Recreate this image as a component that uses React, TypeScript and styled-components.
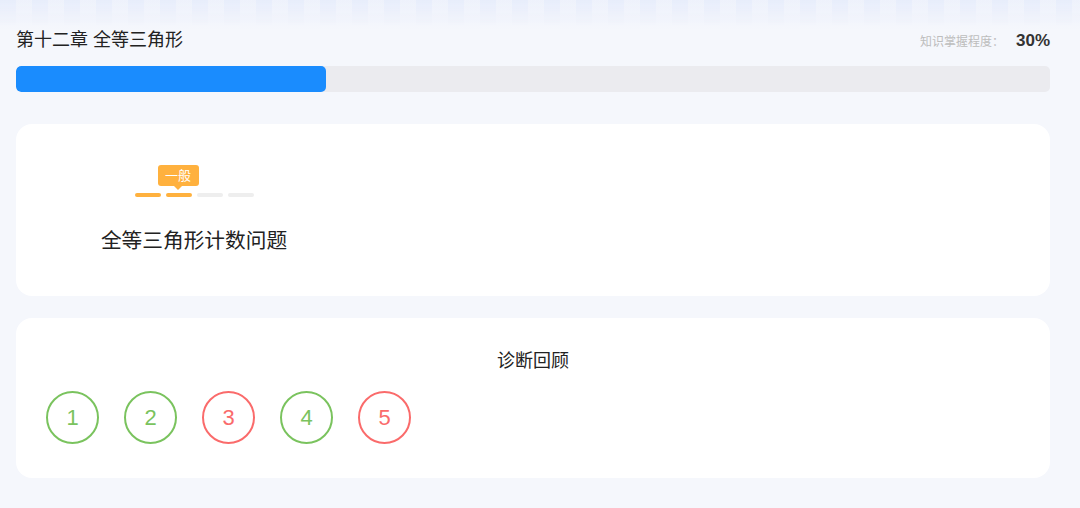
import React from "react";
import styled, { createGlobalStyle } from "styled-components";

const Global = createGlobalStyle`
  html, body { margin: 0; padding: 0; }
  body {
    background: #f5f7fc;
    font-family: "Liberation Sans", "Noto Sans CJK SC", sans-serif;
    color: #222;
  }
`;

const Page = styled.div`
  position: relative;
  width: 1080px;
  height: 508px;
  box-sizing: border-box;
  padding: 26px 30px 0 16px;
  background: linear-gradient(180deg, #eef2fc 0px, #f5f7fc 30px, #f5f7fc 100%);
  overflow: hidden;
`;

const TopPattern = styled.div`
  position: absolute;
  left: 0;
  top: 0;
  width: 100%;
  height: 26px;
  background: repeating-linear-gradient(
    90deg,
    rgba(222, 230, 250, 0.4) 0px,
    rgba(222, 230, 250, 0.4) 16px,
    rgba(240, 243, 252, 0.2) 16px,
    rgba(240, 243, 252, 0.2) 32px
  );
  -webkit-mask-image: linear-gradient(180deg, #000 0%, transparent 100%);
  mask-image: linear-gradient(180deg, #000 0%, transparent 100%);
  pointer-events: none;
`;

const Header = styled.div`
  position: relative;
  display: flex;
  align-items: center;
  justify-content: space-between;
  height: 28px;
`;

const ChapterTitle = styled.div`
  font-size: 18px;
  color: #222;
  line-height: 28px;
`;

const Mastery = styled.div`
  display: flex;
  align-items: baseline;
  gap: 12px;
  padding-top: 2px;
`;

const MasteryLabel = styled.span`
  font-size: 12px;
  color: #bdbdbd;
`;

const MasteryValue = styled.span`
  font-size: 17px;
  font-weight: bold;
  color: #333;
`;

const Track = styled.div`
  margin-top: 12px;
  height: 26px;
  border-radius: 5px;
  background: #ebebef;
  overflow: hidden;
`;

const Fill = styled.div`
  height: 100%;
  background: #1a8cfe;
  border-radius: 5px;
`;

const Card = styled.div<{ $height: number }>`
  background: #fff;
  border-radius: 16px;
  height: ${(p) => p.$height}px;
  box-sizing: border-box;
`;

const TopicCard = styled(Card)`
  margin-top: 32px;
  padding: 41px 0 0 52px;
`;

const Topic = styled.div`
  width: 252px;
  display: flex;
  flex-direction: column;
  align-items: center;
`;

const LevelWrap = styled.div`
  display: flex;
  flex-direction: column;
  align-items: center;
`;

const Badge = styled.div`
  position: relative;
  width: 41px;
  height: 21px;
  border-radius: 3px;
  background: #ffb13e;
  color: #fff;
  font-size: 13px;
  line-height: 21px;
  text-align: center;
  margin-left: -32px;
  &::after {
    content: "";
    position: absolute;
    left: 50%;
    bottom: -4px;
    margin-left: -4px;
    border-left: 4px solid transparent;
    border-right: 4px solid transparent;
    border-top: 4px solid #ffb13e;
  }
`;

const Bars = styled.div`
  display: flex;
  gap: 5px;
  margin-top: 7px;
`;

const Bar = styled.div<{ $on: boolean }>`
  width: 26px;
  height: 4px;
  border-radius: 2px;
  background: ${(p) => (p.$on ? "#ffb13e" : "#eeeeee")};
`;

const TopicName = styled.div`
  margin-top: 31px;
  font-size: 20.7px;
  color: #222;
  line-height: 26px;
`;

const ReviewCard = styled(Card)`
  margin-top: 22px;
  padding-top: 31px;
  display: flex;
  flex-direction: column;
`;

const ReviewTitle = styled.div`
  text-align: center;
  font-size: 18px;
  line-height: 24px;
  color: #222;
`;

const Circles = styled.div`
  display: flex;
  gap: 25px;
  padding-left: 30px;
  margin-top: 18px;
`;

const Circle = styled.div<{ $ok: boolean }>`
  width: 53px;
  height: 53px;
  box-sizing: border-box;
  border-radius: 50%;
  border: 2.5px solid ${(p) => (p.$ok ? "#7ac35e" : "#fa6b6b")};
  color: ${(p) => (p.$ok ? "#7ac35e" : "#fa6b6b")};
  display: flex;
  align-items: center;
  justify-content: center;
  font-size: 22px;
`;

const answers = [true, true, false, true, false];
const level = 2;

export default function App() {
  return (
    <>
      <Global />
      <Page>
        <TopPattern />
        <Header>
          <ChapterTitle>第十二章 全等三角形</ChapterTitle>
          <Mastery>
            <MasteryLabel>知识掌握程度：</MasteryLabel>
            <MasteryValue>30%</MasteryValue>
          </Mastery>
        </Header>
        <Track>
          <Fill style={{ width: "30%" }} />
        </Track>
        <TopicCard $height={172}>
          <Topic>
            <LevelWrap>
              <Badge>一般</Badge>
              <Bars>
                {[0, 1, 2, 3].map((i) => (
                  <Bar key={i} $on={i < level} />
                ))}
              </Bars>
            </LevelWrap>
            <TopicName>全等三角形计数问题</TopicName>
          </Topic>
        </TopicCard>
        <ReviewCard $height={160}>
          <ReviewTitle>诊断回顾</ReviewTitle>
          <Circles>
            {answers.map((ok, i) => (
              <Circle key={i} $ok={ok}>
                {i + 1}
              </Circle>
            ))}
          </Circles>
        </ReviewCard>
      </Page>
    </>
  );
}
